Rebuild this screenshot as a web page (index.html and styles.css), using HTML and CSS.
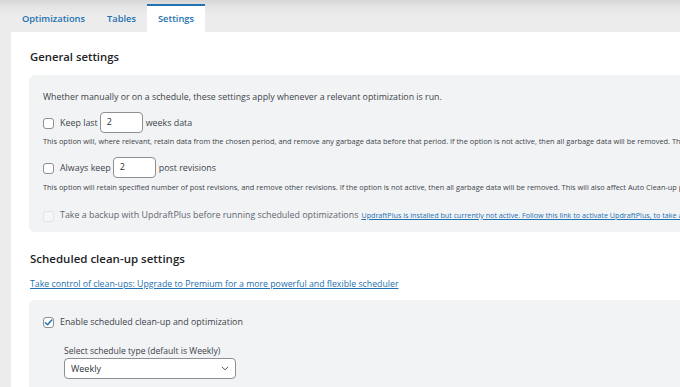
FILE: index.html
```html
<!DOCTYPE html>
<html>
<head>
<meta charset="utf-8">
<link rel="stylesheet" href="styles.css">
</head>
<body>
<nav class="tabs">
  <a class="tab">Optimizations</a>
  <a class="tab">Tables</a>
  <a class="tab active">Settings</a>
</nav>
<main class="panel">
  <h2 class="heading first">General settings</h2>
  <section class="box">
    <p class="intro">Whether manually or on a schedule, these settings apply whenever a relevant optimization is run.</p>
    <div class="row r1">
      <span class="cb"></span>
      <span class="lbl">Keep last</span>
      <span class="num">2</span>
      <span class="lbl">weeks data</span>
    </div>
    <p class="desc d1">This option will, where relevant, retain data from the chosen period, and remove any garbage data before that period. If the option is not active, then all garbage data will be removed. This will also affect Auto Clean-up process</p>
    <div class="row r2">
      <span class="cb"></span>
      <span class="lbl">Always keep</span>
      <span class="num">2</span>
      <span class="lbl">post revisions</span>
    </div>
    <p class="desc d2">This option will retain specified number of post revisions, and remove other revisions. If the option is not active, then all garbage data will be removed. This will also affect Auto Clean-up process</p>
    <div class="row r3">
      <span class="cb disabled"></span>
      <span class="lbl muted">Take a backup with UpdraftPlus before running scheduled optimizations</span>
      <a class="smalllink">UpdraftPlus is installed but currently not active. Follow this link to activate UpdraftPlus, to take a backup before optimization.</a>
    </div>
  </section>
  <h2 class="heading second">Scheduled clean-up settings</h2>
  <a class="premium">Take control of clean-ups: Upgrade to Premium for a more powerful and flexible scheduler</a>
  <section class="box box2">
    <div class="row r4">
      <span class="cb checked"><svg viewBox="0 0 12 12" width="11" height="11"><path d="M2.6 6.2 L5 8.5 L9.6 3.2" fill="none" stroke="#2271b1" stroke-width="1.6" stroke-linecap="round" stroke-linejoin="round"/></svg></span>
      <span class="lbl">Enable scheduled clean-up and optimization</span>
    </div>
    <div class="sched">
      <div class="sched-label">Select schedule type (default is Weekly)</div>
      <div class="select">
        <span>Weekly</span>
        <svg viewBox="0 0 10 6" width="8" height="5"><path d="M1 1 L5 4.6 L9 1" fill="none" stroke="#50575e" stroke-width="1.2"/></svg>
      </div>
    </div>
  </section>
</main>
</body>
</html>
```
FILE: styles.css
```css
html, body {
  margin: 0;
  padding: 0;
  height: 387px;
  overflow: hidden;
}
body {
  font-family: "Open Sans", "Noto Sans", sans-serif;
  background: linear-gradient(#d6d6d6 0px, #e6e6e6 8px, #ececec 16px, #ececec 100%);
  color: #3c434a;
}
.tabs {
  display: flex;
  align-items: flex-end;
  height: 32px;
  padding-left: 11px;
  box-sizing: border-box;
}
.tab {
  display: block;
  padding: 0 11px;
  height: 28px;
  line-height: 26px;
  font-size: 9.3px;
  font-weight: 600;
  color: #2271b1;
  box-sizing: border-box;
  border-top: 2px solid transparent;
}
.tab.active {
  background: #fff;
  border-top-color: #2271b1;
}
.panel {
  margin-left: 11px;
  background: #fff;
  padding: 0 0 0 18px;
  height: 355px;
  overflow: hidden;
  white-space: nowrap;
}
.heading {
  margin: 0;
  font-size: 11.3px;
  font-weight: 600;
  line-height: 16px;
  color: #1d2327;
  padding-left: 1px;
}
.heading.second {
  font-size: 11.5px;
}
.heading.first {
  padding-top: 17px;
  margin-bottom: 10px;
}
.heading.second {
  margin-top: 19px;
  margin-bottom: 11px;
}
.box {
  background: #f2f3f5;
  border-radius: 6px 0 0 6px;
  padding: 16px 0 10px 14px;
}
.intro {
  margin: 0;
  font-size: 8.8px;
  line-height: 12px;
}
.row {
  display: flex;
  align-items: center;
}
.r1 { margin-top: 9px; }
.r2 { margin-top: 11px; }
.r3 { margin-top: 16px; height: 14px; }
.cb {
  width: 11px;
  height: 11px;
  box-sizing: border-box;
  border: 1px solid #8c8f94;
  border-radius: 3px;
  background: #fff;
  margin-right: 6px;
  flex: none;
  position: relative;
  top: 1px;
}
.cb.disabled {
  border-color: #e2e4e7;
  background: #f6f7f7;
}
.cb.checked svg {
  display: block;
  margin: -1px 0 0 -1px;
}
.lbl {
  font-size: 8.9px;
  line-height: 14px;
}
.lbl.muted {
  color: #5f666d;
}
.num {
  width: 43px;
  height: 21px;
  box-sizing: border-box;
  border: 1px solid #8c8f94;
  border-radius: 4px;
  background: #fff;
  margin: 0 3px 0 2px;
  font-size: 9px;
  line-height: 17px;
  padding-left: 6px;
  color: #2c3338;
}
.desc {
  margin: 0;
  font-size: 7.4px;
  line-height: 10px;
  color: #3c434a;
}
.d1 { margin-top: 3px; }
.d2 { margin-top: 4px; }
.smalllink {
  font-size: 7.2px;
  color: #2271b1;
  text-decoration: underline;
  margin-left: 3px;
  line-height: 12px;
}
.premium {
  display: block;
  font-size: 8.75px;
  line-height: 12px;
  color: #2271b1;
  text-decoration: underline;
  padding-left: 1px;
}
.box2 {
  margin-top: 10px;
  padding-top: 15px;
  height: 100px;
}
.r4 .cb { top: 0; }
.sched {
  margin-left: 21px;
  margin-top: 16px;
}
.sched-label {
  font-size: 8.6px;
  line-height: 12px;
  margin-bottom: 1px;
}
.select {
  width: 172px;
  height: 21px;
  box-sizing: border-box;
  border: 1px solid #8c8f94;
  border-radius: 4px;
  background: #fff;
  display: flex;
  align-items: center;
  justify-content: space-between;
  padding: 0 6px 0 6px;
  font-size: 9px;
  color: #2c3338;
}
.select svg { display: block; }
```
